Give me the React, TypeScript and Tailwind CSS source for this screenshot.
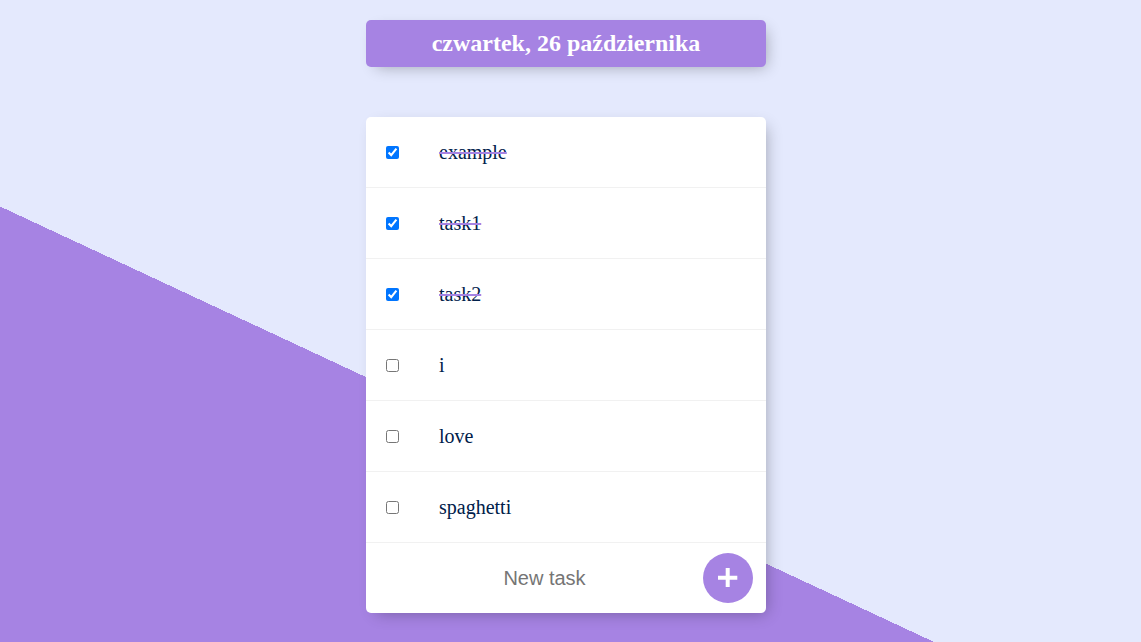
import { useState } from "react";
import type { FormEvent } from "react";

type Task = { id: number; name: string; done: boolean };

const initialTasks: Task[] = [
  { id: 1, name: "example", done: true },
  { id: 2, name: "task1", done: true },
  { id: 3, name: "task2", done: true },
  { id: 4, name: "i", done: false },
  { id: 5, name: "love", done: false },
  { id: 6, name: "spaghetti", done: false },
];

function TaskRow({ task, onToggle }: { task: Task; onToggle: () => void }) {
  const id = `task-${task.id}`;
  return (
    <li className="flex min-h-[71px] items-center border-b border-[#f1f1f1]">
      <input id={id} type="checkbox" checked={task.done} onChange={onToggle} className="m-5 size-[13px] shrink-0" />
      <label
        htmlFor={id}
        className={
          task.done
            ? "p-5 text-xl leading-[23px] text-[#00204a] line-through decoration-[#a683e3] decoration-2"
            : "p-5 text-xl leading-[23px] text-[#00204a]"
        }
      >
        {task.name}
      </label>
    </li>
  );
}

export default function App() {
  const [tasks, setTasks] = useState(initialTasks);
  const [draft, setDraft] = useState("");

  const toggle = (id: number) =>
    setTasks((list) => list.map((t) => (t.id === id ? { ...t, done: !t.done } : t)));

  const addTask = (event: FormEvent) => {
    event.preventDefault();
    if (!draft.trim()) return;
    setTasks((list) => [...list, { id: list.length + 1, name: draft.trim(), done: false }]);
    setDraft("");
  };

  return (
    <main className="min-h-screen bg-[linear-gradient(25deg,#a683e3_37.1%,#e4e9fd_37.1%)] pt-5 pr-[9px] pb-7 font-['Liberation_Serif',serif]">
      <header className="mx-auto max-w-[400px] rounded-[5px] bg-[#a683e3] p-2.5 text-center shadow-[5px_5px_15px_-5px_rgba(0,0,0,0.3)]">
        <h1 className="text-2xl leading-[27px] font-bold text-white">czwartek, 26 października</h1>
      </header>

      <section className="mx-auto mt-[50px] max-w-[400px] rounded-[5px] bg-white shadow-[5px_5px_15px_-5px_rgba(0,0,0,0.3)]">
        <ul>
          {tasks.map((task) => (
            <TaskRow key={task.id} task={task} onToggle={() => toggle(task.id)} />
          ))}
        </ul>
        <form onSubmit={addTask} className="flex h-[70px] items-center pr-[13px] pl-5 font-['Liberation_Sans',sans-serif]">
          <input
            type="text"
            aria-label="New task"
            placeholder="New task"
            autoComplete="off"
            value={draft}
            onChange={(e) => setDraft(e.target.value)}
            className="h-[60px] min-w-0 flex-1 bg-transparent text-center text-xl text-[#00204a] outline-none placeholder:text-[#757575]"
          />
          <button
            type="submit"
            aria-label="Add task"
            className="flex size-[50px] shrink-0 items-center justify-center rounded-full bg-[#a683e3] text-white"
          >
            <svg viewBox="0 0 20 20" className="size-5" fill="none" stroke="currentColor" strokeWidth="4" aria-hidden="true">
              <path d="M0 9.7H19.3M9.7 0V19" />
            </svg>
          </button>
        </form>
      </section>
    </main>
  );
}
